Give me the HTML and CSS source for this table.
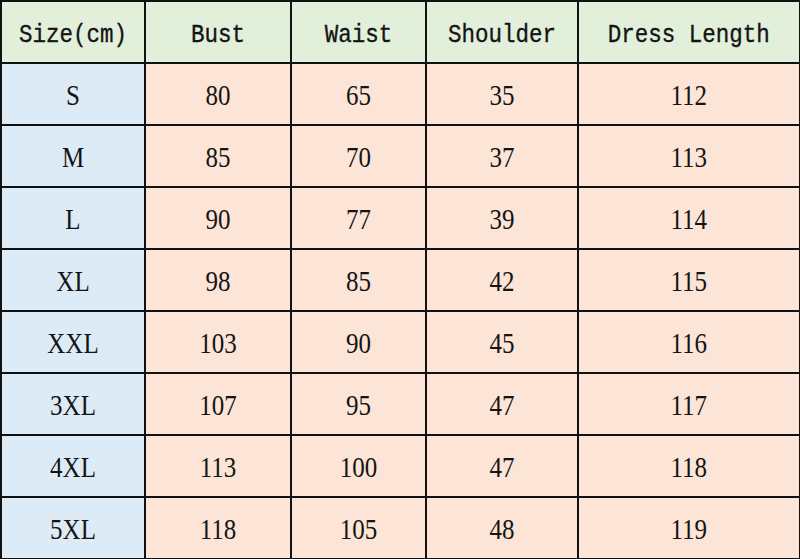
FILE: index.html
```html
<!DOCTYPE html>
<html>
<head>
<meta charset="utf-8">
<link rel="stylesheet" href="styles.css">
</head>
<body>
<table class="sizes">
<colgroup>
<col class="c1"><col class="c2"><col class="c3"><col class="c4"><col class="c5">
</colgroup>
<thead>
<tr class="head"><th><span>Size(cm)</span></th><th><span>Bust</span></th><th><span>Waist</span></th><th><span>Shoulder</span></th><th><span>Dress Length</span></th></tr>
</thead>
<tbody>
<tr><td class="size"><span>S</span></td><td><span>80</span></td><td><span>65</span></td><td><span>35</span></td><td><span>112</span></td></tr>
<tr><td class="size"><span>M</span></td><td><span>85</span></td><td><span>70</span></td><td><span>37</span></td><td><span>113</span></td></tr>
<tr><td class="size"><span>L</span></td><td><span>90</span></td><td><span>77</span></td><td><span>39</span></td><td><span>114</span></td></tr>
<tr><td class="size"><span>XL</span></td><td><span>98</span></td><td><span>85</span></td><td><span>42</span></td><td><span>115</span></td></tr>
<tr><td class="size"><span>XXL</span></td><td><span>103</span></td><td><span>90</span></td><td><span>45</span></td><td><span>116</span></td></tr>
<tr><td class="size"><span>3XL</span></td><td><span>107</span></td><td><span>95</span></td><td><span>47</span></td><td><span>117</span></td></tr>
<tr><td class="size"><span>4XL</span></td><td><span>113</span></td><td><span>100</span></td><td><span>47</span></td><td><span>118</span></td></tr>
<tr class="last"><td class="size"><span>5XL</span></td><td><span>118</span></td><td><span>105</span></td><td><span>48</span></td><td><span>119</span></td></tr>
</tbody>
</table>
</body>
</html>
```

FILE: styles.css
```css
html, body {
  margin: 0;
  padding: 0;
  background: #ffffff;
}
.sizes {
  border-collapse: collapse;
  table-layout: fixed;
  width: 799px;
  color: #141414;
}
.c1 { width: 144px; }
.c2 { width: 146px; }
.c3 { width: 135px; }
.c4 { width: 152px; }
.c5 { width: 222px; }
.sizes th, .sizes td {
  border: 2px solid #111111;
  padding: 3px 0 0 0;
  text-align: center;
  vertical-align: middle;
  height: 57px;
  background: #fce4d6;
  font-family: "Liberation Serif", "Times New Roman", serif;
  font-size: 25px;
  font-weight: normal;
}
.sizes .last td {
  border-bottom-width: 3px;
}
.sizes th {
  background: #e2efda;
  font-family: "Liberation Mono", "DejaVu Sans Mono", monospace;
  font-size: 22.5px;
  letter-spacing: 0;
  padding-top: 6px;
  height: 54px;
  -webkit-text-stroke: 0.3px #141414;
}
.sizes td.size {
  background: #ddebf7;
}
.sizes span {
  display: inline-block;
  transform: scaleY(1.15);
}
.sizes th:last-child, .sizes td:last-child {
  border-right-width: 3px;
}
```
